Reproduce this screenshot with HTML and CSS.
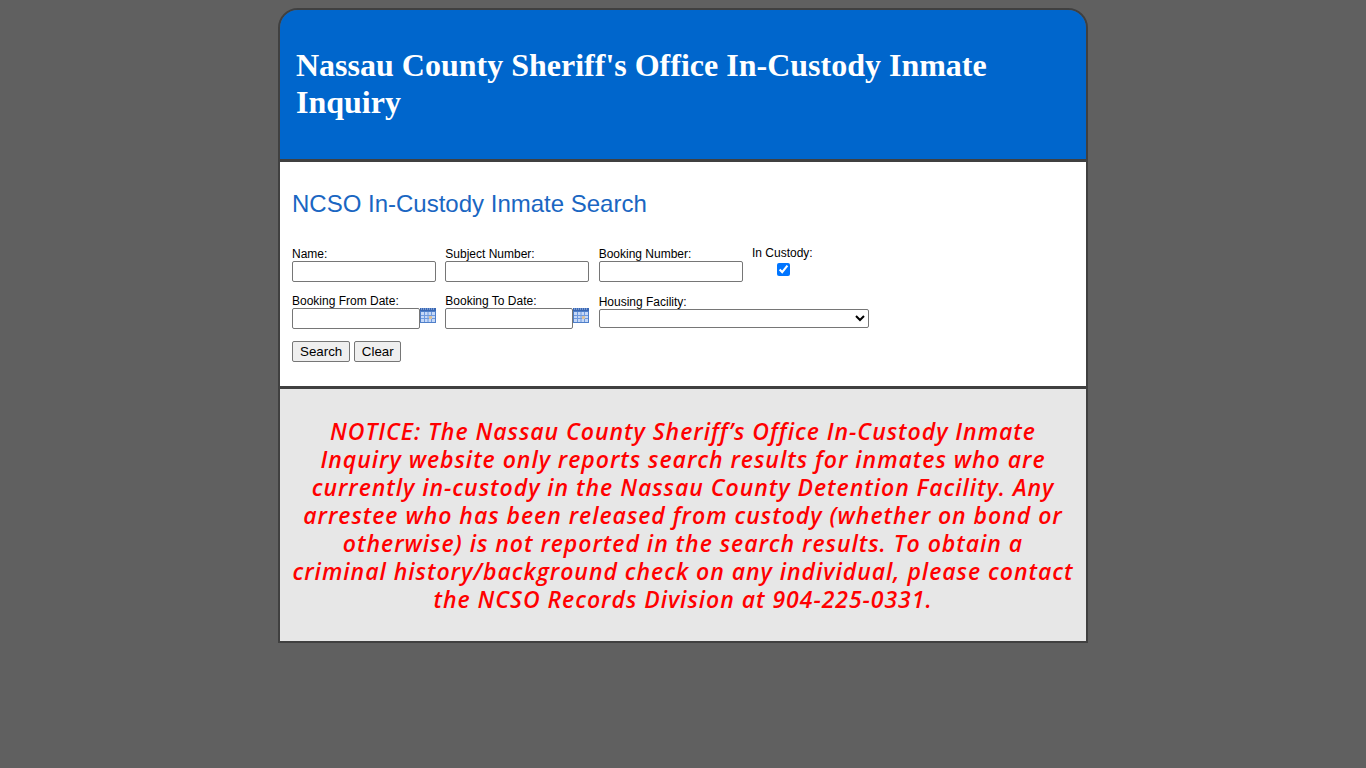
FILE: index.html
```html
<!DOCTYPE html>
<html lang="en">
<head>
<meta charset="utf-8">
<title>Nassau County Sheriff's Office In-Custody Inmate Inquiry</title>
<link rel="stylesheet" href="styles.css">
</head>
<body>
<div class="page">
  <header class="banner">
    <h1>Nassau County Sheriff's Office In-Custody Inmate Inquiry</h1>
  </header>
  <main class="search">
    <h2>NCSO In-Custody Inmate Search</h2>
    <form class="fields">
      <div class="row row-one">
        <label class="field">Name:<input type="text"></label>
        <label class="field">Subject Number:<input type="text"></label>
        <label class="field">Booking Number:<input type="text"></label>
        <label class="field custody">In Custody:<input type="checkbox" checked></label>
      </div>
      <div class="row row-two">
        <div class="field">
          <label for="from">Booking From Date:</label>
          <div class="date"><input id="from" type="text">
            <svg class="cal" viewBox="0 0 16 16" width="16" height="16"><use href="#calendar"/></svg>
          </div>
        </div>
        <div class="field">
          <label for="to">Booking To Date:</label>
          <div class="date"><input id="to" type="text">
            <svg class="cal" viewBox="0 0 16 16" width="16" height="16"><use href="#calendar"/></svg>
          </div>
        </div>
        <label class="field facility">Housing Facility:<select><option></option></select></label>
      </div>
      <div class="actions">
        <button type="button">Search</button>
        <button type="button" class="clear">Clear</button>
      </div>
    </form>
  </main>
  <section class="notice">
    <p>NOTICE: The Nassau County Sheriff’s Office In-Custody Inmate<br>Inquiry website only reports search results for inmates who are<br>currently in-custody in the Nassau County Detention Facility. Any<br>arrestee who has been released from custody (whether on bond or<br>otherwise) is not reported in the search results. To obtain a<br>criminal history/background check on any individual, please contact<br>the NCSO Records Division at 904-225-0331.</p>
  </section>
</div>
<svg class="defs" width="0" height="0">
  <defs>
    <g id="calendar">
      <rect x="0" y="0" width="16" height="15" fill="#4f7fc9"/>
      <rect x="0" y="0" width="16" height="3" fill="#3a68b4"/>
      <path d="M1 1h14" stroke="#b9cdf0" stroke-width="1" stroke-dasharray="1 1"/>
      <rect x="1" y="4" width="14" height="10" fill="#c5d8f7"/>
      <path d="M4.5 4v10M8 4v10M11.500 4v10M1 7.500h14M1 10.500h14" stroke="#6f9ade" stroke-width="1"/>
      <rect x="9" y="8" width="3" height="3" fill="#d8c2a0"/>
    </g>
  </defs>
</svg>
</body>
</html>
```
FILE: styles.css
```css
* { box-sizing: border-box; }
html, body { margin: 0; padding: 0; }
body {
  background: #606060;
  padding-top: 8px;
  font-family: "Liberation Sans", Arial, sans-serif;
}
.page {
  width: 810px;
  margin: 0 auto;
  border: 2px solid #404040;
  border-top-left-radius: 20px;
  border-top-right-radius: 20px;
  overflow: hidden;
}
.banner {
  height: 152px;
  background: #0066cc;
  border-bottom: 3px solid #404040;
  padding: 37px 16px 0;
}
.banner h1 {
  margin: 0;
  color: #fff;
  font-family: "Liberation Serif", "Times New Roman", serif;
  font-size: 32px;
  line-height: 37px;
  font-weight: bold;
}
.search {
  height: 227px;
  background: #fff;
  border-bottom: 3px solid #404040;
  padding: 27px 12px 0;
}
.search h2 {
  margin: 0 0 28px;
  color: #1a66c2;
  font-size: 24px;
  line-height: 30px;
  font-weight: normal;
}
.row { display: flex; font-size: 12px; color: #000; }
.row-one { height: 35px; }
.row-two { height: 37px; margin-top: 12px; }
.field { display: block; width: 153.333px; line-height: 14px; }
.field input[type="text"] {
  display: block;
  width: 144px;
  height: 21px;
  margin: 0;
  padding: 1px 2px;
  border: 1px solid #767676;
  border-radius: 2px;
  background: #fff;
}
.custody { width: 62px; margin-top: -1px; }
.custody input {
  display: block;
  width: 13px;
  height: 13px;
  margin: 3px 0 0 25px;
  accent-color: #0075ff;
}
.date { display: flex; align-items: flex-start; }
.date input[type="text"] { width: 128px; }
.cal { display: block; }
.facility { width: 270px; padding-top: 1px; }
.facility select {
  display: block;
  width: 270px;
  height: 19px;
  margin: 0;
  border: 1px solid #767676;
  border-radius: 2px;
  background: #fff;
  font-size: 12px;
}
.actions { display: flex; gap: 4px; margin-top: 10px; }
.actions button {
  height: 21px;
  padding: 1px 7px;
  border: 1px solid #767676;
  border-radius: 2px;
  background: #efefef;
  color: #000;
  font-family: "Liberation Sans", Arial, sans-serif;
  font-size: 13.333px;
}
.actions .clear { width: 47px; padding: 1px 0; }
.notice {
  height: 252px;
  background: #e7e7e7;
  padding: 28px 0 0;
}
.notice p {
  margin: 0;
  color: #ff0000;
  text-align: center;
  font-family: "Open Sans", "Lato", sans-serif;
  font-size: 23px;
  line-height: 28px;
  font-style: italic;
  font-weight: 600;
  letter-spacing: 0.97px;
  white-space: nowrap;
}
.defs { position: absolute; }
```
